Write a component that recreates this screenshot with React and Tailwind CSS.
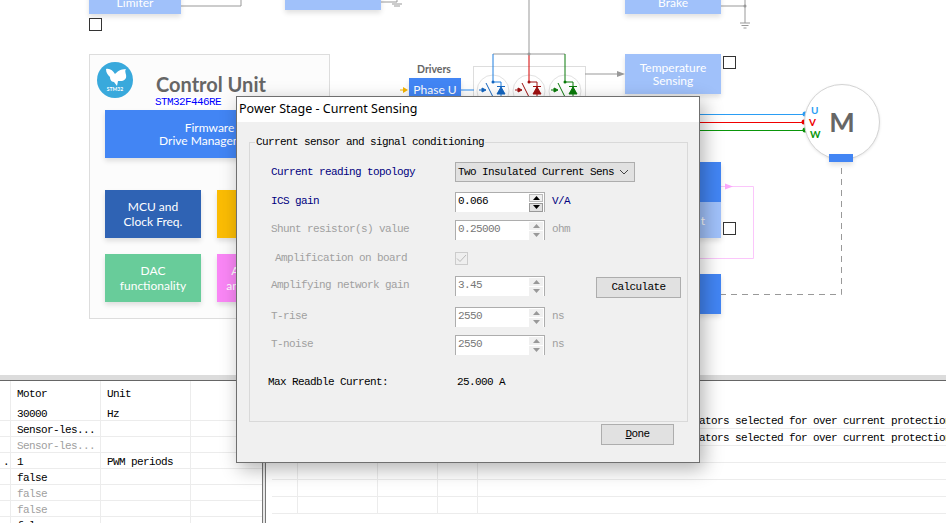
import React from 'react';

const mono = "font-['Liberation_Mono',monospace] text-[11px] tracking-[-0.6px] leading-none";
const gothic = "font-['Lato',sans-serif]";

const Block = ({ className, children }) => (
    <div className={`absolute flex flex-col items-center justify-center text-center text-white text-[12px] shadow-[0_3px_5px_rgba(0,0,0,0.12)] ${gothic} ${className}`}>
        {children}
    </div>
);

const Check = ({ className }) => (
    <div className={`absolute w-[13px] h-[13px] border border-[#333] bg-white ${className}`}></div>
);

const Wires = () => (
    <svg className="absolute left-0 top-0" width="946" height="375" fill="none">
        {/* top feeds */}
        <path d="M181 6H241V0" stroke="#999" strokeWidth="1" />
        <path d="M381 2H397V0" stroke="#999" strokeWidth="1" />
        <path d="M392 4H402M394 6H400" stroke="#999" strokeWidth="1" />
        <path d="M721 6H745M745 0V23" stroke="#999" strokeWidth="1" />
        <circle cx="745" cy="6" r="1.5" fill="#999" />
        <path d="M740 23H750M741.5 25.500H748.500M743.500 28H746.500" stroke="#999" strokeWidth="1" />

        {/* bus */}
        <path d="M529 0V54" stroke="#999" strokeWidth="1" />
        <path d="M493 54H529" stroke="#999" strokeWidth="1" />
        <path d="M529 54H565" stroke="#999" strokeWidth="1" />

        {/* switch panel */}
        <rect x="473.500" y="66.500" width="112" height="40" fill="#fff" stroke="#ddd" />
        {[493, 529, 565].map((cx) => (
            <circle key={cx} cx={cx} cy="91" r="16" fill="#fff" stroke="#e2e2e2" />
        ))}

        {/* phase U */}
        <path d="M493 54V82M493 82H501V100" stroke="#1f7fe0" strokeWidth="1" />
        <circle cx="493" cy="82" r="1.500" fill="#1566c0" />
        <path d="M479 90H484M482 88L486 90L482 92Z M486 83L493 97" stroke="#1566c0" strokeWidth="1" fill="#1566c0" />
        <path d="M497 94L501 87L505 94Z M497 86.500H505" fill="#1566c0" stroke="#1566c0" />

        {/* phase V */}
        <path d="M529 54V82" stroke="#d40000" strokeWidth="1" />
        <path d="M529 82H537V100" stroke="#a01010" strokeWidth="1" />
        <circle cx="529" cy="82" r="1.500" fill="#a01010" />
        <path d="M515 90H520M518 88L522 90L518 92Z M522 83L529 97" stroke="#a01010" strokeWidth="1" fill="#a01010" />
        <path d="M533 94L537 87L541 94Z M533 86.500H541" fill="#a01010" stroke="#a01010" />

        {/* phase W */}
        <path d="M565 54V82M565 82H573V100" stroke="#0a7a0a" strokeWidth="1" />
        <circle cx="565" cy="82" r="1.500" fill="#0a7a0a" />
        <path d="M551 90H556M554 88L558 90L554 92Z M558 83L565 97" stroke="#0a7a0a" strokeWidth="1" fill="#0a7a0a" />
        <path d="M569 94L573 87L577 94Z M569 86.500H577" fill="#0a7a0a" stroke="#0a7a0a" />
        <circle cx="529" cy="54" r="1.500" fill="#999" />

        {/* driver in and out */}
        <path d="M400 90H405" stroke="#f4b400" strokeWidth="1" />
        <path d="M403 87L408 90L403 93Z" fill="#f4b400" />
        <path d="M461 90H474" stroke="#2a8cf0" strokeWidth="1" />

        {/* temperature feed */}
        <path d="M585 74H618" stroke="#999" strokeWidth="1" />
        <path d="M617 71L625 74L617 77Z" fill="#999" />

        {/* motor lines */}
        <path d="M690 114.500H805" stroke="#2a9df4" strokeWidth="1" />
        <path d="M690 122.500H804" stroke="#f00000" strokeWidth="1" />
        <path d="M690 130.500H805" stroke="#0a960a" strokeWidth="1" />
        <circle cx="805" cy="114" r="2.500" fill="#2a9df4" />
        <circle cx="804" cy="122" r="2.500" fill="#f00000" />
        <circle cx="805" cy="130" r="2.500" fill="#0a960a" />

        {/* pink feedback */}
        <path d="M721 186.500H753.500V258.500H690" stroke="#fbc6fb" strokeWidth="1" />
        <path d="M725 183.500L733 186.500L725 189.500Z" fill="#fba8fb" />

        {/* encoder dashes */}
        <path d="M841.500 168V294.500H721" stroke="#999" strokeWidth="1" strokeDasharray="6 5" />
    </svg>
);

const Logo = () => (
    <svg className="absolute left-[97px] top-[62px]" width="36" height="36" viewBox="0 0 36 36">
        <circle cx="18" cy="18" r="18" fill="#39a9dc" />
        <path d="M9 7C13 6 16 9 18 12C20 10 23 7 29 7C27 10 30 12 29 16C27 20 23 19 21 19L20 24L17 20C14 20 13 17 13 15C11 13 9 11 9 7Z" fill="#fff" />
        <text x="18" y="29" fontSize="5" fontWeight="700" fill="#fff" textAnchor="middle" fontFamily="Lato, sans-serif">STM32</text>
    </svg>
);

const Motor = () => (
    <div className="absolute left-[804px] top-[84px] w-[76px] h-[76px] rounded-full bg-white border border-[#d4d4d4] flex items-center justify-center shadow-[0_1px_3px_rgba(0,0,0,0.1)]">
        <span className={`text-[#666] text-[27px] font-bold leading-none mt-[-2px] ${gothic}`}>M</span>
    </div>
);

const Canvas = () => (
    <div className="relative h-[375px] bg-white overflow-hidden shrink-0">
        <div className="absolute left-[89px] top-[54px] w-[241px] h-[265px] border border-[#ddd] bg-[#fcfcfc]"></div>
        <Wires />
        <Logo />
        <Block className="left-[89px] top-[-26px] w-[92px] h-[40px] bg-[#a0c1fa] justify-end pb-[4px] leading-[15px]">Limiter</Block>
        <Block className="left-[285px] top-[-30px] w-[96px] h-[40px] bg-[#a0c1fa]"></Block>
        <Block className="left-[625px] top-[-26px] w-[96px] h-[40px] bg-[#a0c1fa] justify-end pb-[4px] leading-[15px]">Brake</Block>
        <Check className="left-[89px] top-[18px]" />
        <div className={`absolute left-[156px] top-[71px] text-[20px] font-bold text-[#666] leading-[26px] ${gothic}`}>Control Unit</div>
        <div className={`absolute left-[155px] top-[97px] bg-white text-[#0000ff] ${mono}`}>STM32F446RE</div>
        <Block className="left-[105px] top-[110px] w-[209px] h-[48px] bg-[#4285f4] leading-[13px]"><span>Firmware</span><span>Drive Management</span></Block>
        <Block className="left-[105px] top-[190px] w-[96px] h-[48px] bg-[#2f63b4] leading-[15px]"><span>MCU and</span><span>Clock Freq.</span></Block>
        <Block className="left-[217px] top-[190px] w-[96px] h-[48px] bg-[#fbbc04]"></Block>
        <Block className="left-[105px] top-[254px] w-[96px] h-[48px] bg-[#68cc9a] leading-[15px]"><span>DAC</span><span>functionality</span></Block>
        <Block className="left-[217px] top-[254px] w-[96px] h-[48px] bg-[#f986f5] leading-[15px]"><span>Analog Input</span><span>and Protection</span></Block>
        <div className={`absolute left-[417px] top-[62px] text-[10.500px] font-bold text-[#666] ${gothic}`}>Drivers</div>
        <Block className="left-[409px] top-[78px] w-[52px] h-[40px] bg-[#4285f4] justify-start pt-[4px] leading-[15px]">Phase U</Block>
        <Block className="left-[625px] top-[54px] w-[96px] h-[40px] bg-[#a0c1fa] leading-[13px]"><span>Temperature</span><span>Sensing</span></Block>
        <Check className="left-[723px] top-[56px]" />
        <Motor />
        <div className={`absolute left-[811px] top-[104px] text-[10px] leading-[12px] font-bold text-[#2a9df4] ${gothic}`}>U</div>
        <div className={`absolute left-[809px] top-[116px] text-[10px] leading-[12px] font-bold text-[#f00000] ${gothic}`}>V</div>
        <div className={`absolute left-[810px] top-[128px] text-[10px] leading-[12px] font-bold text-[#0a960a] ${gothic}`}>W</div>
        <div className="absolute left-[829px] top-[154px] w-[24px] h-[8px] bg-[#4285f4] shadow-[0_3px_5px_rgba(0,0,0,0.12)]"></div>
        <Block className="left-[625px] top-[162px] w-[96px] h-[40px] bg-[#4285f4]"></Block>
        <Block className="left-[625px] top-[202px] w-[96px] h-[36px] bg-[#a0c1fa] items-end pr-[16px] leading-[15px]">t</Block>
        <Check className="left-[723px] top-[222px]" />
        <Block className="left-[625px] top-[274px] w-[96px] h-[40px] bg-[#4285f4]"></Block>
    </div>
);

const Spin = ({ value, disabled, unit }) => (
    <div className="flex items-center">
        <div className="w-[90px] h-5 border-x border-t border-[#adadad] bg-white flex items-center pr-[1px]">
            <span className={`flex-1 pl-[2px] pb-[2px] ${mono} ${disabled ? 'text-[#777]' : 'text-black'}`}>{value}</span>
            <div className={`w-[14px] h-[18px] flex flex-col gap-[1px] ${disabled ? 'text-[#999]' : 'text-black'}`}>
                <div className={`flex-1 flex items-center justify-center ${disabled ? 'bg-[#f0f0f0]' : 'bg-[#f0f0f0] border border-[#bbb]'}`}>
                    <svg width="7" height="4"><path d="M3.500 0L7 4H0Z" fill="currentColor" /></svg>
                </div>
                <div className={`flex-1 flex items-center justify-center ${disabled ? 'bg-[#f0f0f0]' : 'bg-[#e1e1e1] border border-[#999]'}`}>
                    <svg width="7" height="4"><path d="M0 0H7L3.500 4Z" fill="currentColor" /></svg>
                </div>
            </div>
        </div>
        {unit && <span className={`ml-[7px] pb-[2px] ${mono} ${disabled ? 'text-[#a0a0a0]' : 'text-[#000080]'}`}>{unit}</span>}
    </div>
);

const Row = ({ label, disabled, className = '', indent = '', children }) => (
    <div className={`flex items-center h-5 ${className}`}>
        <div className={`w-[184px] ${mono} ${indent} ${disabled ? 'text-[#a0a0a0]' : 'text-[#000080]'}`}>{label}</div>
        {children}
    </div>
);

const WinButton = ({ className, children }) => (
    <button className={`h-[21px] bg-[#e1e1e1] border border-[#adadad] text-black ${mono} ${className}`}>{children}</button>
);

const Dialog = () => (
    <div className="absolute left-[236px] top-[96px] w-[464px] h-[367px] border border-[#6f6f6f] bg-[#f0f0f0] shadow-[4px_6px_18px_rgba(0,0,0,0.3)] flex flex-col">
        <div className="h-[25px] bg-white flex items-center pl-[2px] shrink-0 font-['Noto_Sans',sans-serif] text-[12.5px] text-black">Power Stage - Current Sensing</div>
        <div className="relative mt-5 ml-3 mr-[11px] h-[280px] border border-[#d9d9d9] pt-[19px] pl-[21px]">
            <div className={`absolute left-[5px] top-[-6px] bg-[#f0f0f0] px-[1px] text-black ${mono}`}>Current sensor and signal conditioning</div>
            <Row label="Current reading topology">
                <div className={`w-[180px] h-5 flex items-center justify-between pl-[2px] pr-[5px] bg-[#e1e1e1] border border-[#adadad] text-black ${mono}`}>
                    <span>Two Insulated Current Sens</span>
                    <svg width="10" height="6" fill="none"><path d="M1 1L5 5L9 1" stroke="#444" /></svg>
                </div>
            </Row>
            <Row label="ICS gain" indent="pb-[2px]" className="mt-[10px]"><Spin value="0.066" unit="V/A" /></Row>
            <Row label="Shunt resistor(s) value" indent="pb-[2px]" disabled className="mt-2"><Spin value="0.25000" disabled unit="ohm" /></Row>
            <Row label="Amplification on board" disabled indent="pl-[4px]" className="mt-2">
                <div className="w-[13px] h-[13px] border border-[#ccc] bg-[#efefef] flex items-center justify-center">
                    <svg width="11" height="9" fill="none"><path d="M1 4.500L4 7.500L10 1" stroke="#bbb" /></svg>
                </div>
            </Row>
            <Row label="Amplifying network gain" indent="pb-[2px]" disabled className="mt-2">
                <Spin value="3.45" disabled />
                <WinButton className="ml-[51px] w-[85px] mt-[2px]">Calculate</WinButton>
            </Row>
            <Row label="T-rise" indent="pb-[2px]" disabled className="mt-[11px]"><Spin value="2550" disabled unit="ns" /></Row>
            <Row label="T-noise" indent="pb-[2px]" disabled className="mt-2"><Spin value="2550" disabled unit="ns" /></Row>
            <div className={`flex items-center h-5 mt-[17px] ml-[-3px] text-black ${mono}`}>
                <span className="w-[189px]">Max Readble Current:</span>
                <span>25.000 A</span>
            </div>
        </div>
        <div className="flex justify-end mt-[2px] pr-[25px]">
            <WinButton className="w-[73px]"><span className="underline">D</span>one</WinButton>
        </div>
    </div>
);

const motorRows = [
    { dot: '', value: '30000', unit: 'Hz' },
    { dot: '', value: 'Sensor-les...', unit: '' },
    { dot: '', value: 'Sensor-les...', unit: '', muted: true },
    { dot: '.', value: '1', unit: 'PWM periods' },
    { dot: '', value: 'false', unit: '' },
    { dot: '', value: 'false', unit: '', muted: true },
    { dot: '', value: 'false', unit: '', muted: true },
    { dot: '', value: 'false', unit: '' },
];

const MotorTable = () => (
    <div className={`w-[262px] shrink-0 text-black ${mono}`}>
        <div className="grid grid-cols-[11px_90px_90px_71px] h-6">
            <div className="border-r border-[#ececec]"></div>
            <div className="border-r border-[#ececec] pl-[6px] pt-[8px]">Motor</div>
            <div className="border-r border-[#ececec] pl-[6px] pt-[8px]">Unit</div>
            <div></div>
        </div>
        {motorRows.map((row, i) => (
            <div key={i} className="grid grid-cols-[11px_90px_90px_71px] h-4 border-b border-[#ececec]">
                <div className="border-r border-[#ececec] pl-[3px] pt-[4px]">{row.dot}</div>
                <div className={`border-r border-[#ececec] pl-[6px] pt-[4px] ${row.muted ? 'text-[#a0a0a0]' : ''}`}>{row.value}</div>
                <div className="border-r border-[#ececec] pl-[6px] pt-[4px]">{row.unit}</div>
                <div></div>
            </div>
        ))}
    </div>
);

const logRows = [
    'ators selected for over current protection',
    'ators selected for over current protection',
    '', '', '', '',
];

const LogTable = () => (
    <div className={`flex-1 min-w-0 pl-[6px] pt-[31px] overflow-hidden text-black ${mono}`}>
        {logRows.map((text, i) => (
            <div key={i} className="grid grid-cols-[26px_80px_60px_40px_1fr] h-[17px] border-b border-[#ececec]">
                <div className="border-r border-[#ececec]"></div>
                <div className="border-r border-[#ececec]"></div>
                <div className="border-r border-[#ececec]"></div>
                <div className="border-r border-[#ececec]"></div>
                <div className="pl-[221px] pt-[4px] whitespace-nowrap">{text}</div>
            </div>
        ))}
    </div>
);

const App = () => {
    return (
        <div className="relative w-[946px] h-[523px] overflow-hidden bg-white flex flex-col">
            <Canvas />
            <div className="h-[5px] bg-[#dcdcdc] border-b border-[#666] shrink-0 box-content"></div>
            <div className="flex flex-1 min-h-0 overflow-hidden">
                <MotorTable />
                <div className="w-[4px] shrink-0 border-x border-[#777] bg-[#e8e8e8]"></div>
                <LogTable />
            </div>
            <Dialog />
        </div>
    );
};

export default App;
